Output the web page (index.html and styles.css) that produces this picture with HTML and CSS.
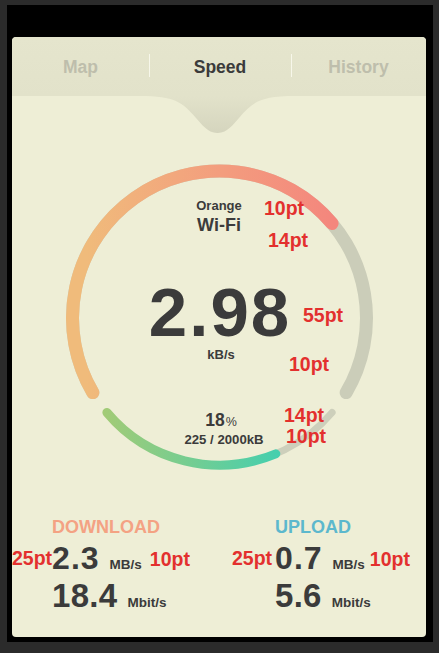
FILE: index.html
```html
<!DOCTYPE html>
<html lang="en">
<head>
<meta charset="utf-8">
<title>Speed</title>
<link rel="stylesheet" href="styles.css">
</head>
<body>
<div class="frame">
  <div class="card">
    <nav class="tabs">
      <div class="tab">Map</div>
      <div class="tab active">Speed</div>
      <div class="tab">History</div>
      <svg class="notch" width="155" height="38" viewBox="0 0 155 38">
        <defs>
          <linearGradient id="ng" x1="0" y1="0" x2="0" y2="1">
            <stop offset="0" stop-color="#e2e2ca"/>
            <stop offset="1" stop-color="#d5d5be"/>
          </linearGradient>
        </defs>
        <path d="M0,0 C35,0 42,6 56,22 C66,34 71,37 77.5,37 C84,37 89,34 99,22 C113,6 120,0 155,0 Z" fill="url(#ng)"/>
      </svg>
    </nav>

    <section class="gauge">
      <svg class="dial" width="414" height="409" viewBox="0 0 414 409">
        <defs>
          <linearGradient id="warm" gradientUnits="userSpaceOnUse" x1="74" y1="0" x2="322" y2="0">
            <stop offset="0" stop-color="#f0bb7b"/>
            <stop offset="0.55" stop-color="#f39d7e"/>
            <stop offset="1" stop-color="#f4867d"/>
          </linearGradient>
          <linearGradient id="green" gradientUnits="userSpaceOnUse" x1="92" y1="0" x2="266" y2="0">
            <stop offset="0" stop-color="#a2cb76"/>
            <stop offset="1" stop-color="#45cfae"/>
          </linearGradient>
        </defs>
        <path d="M80.84,296.6 A147,147 0 1 1 334.16,296.6" fill="none" stroke="#cbcdb9" stroke-width="13" stroke-linecap="round"/>
        <path d="M80.84,296.6 A147,147 0 0 1 320.1,127.5" fill="none" stroke="url(#warm)" stroke-width="13" stroke-linecap="round"/>
        <path d="M94.9,316.5 A147,147 0 0 0 320.1,316.5" fill="none" stroke="#cdcfbb" stroke-width="7" stroke-linecap="round"/>
        <path d="M94.9,316.5 A147,147 0 0 0 263.8,357.8" fill="none" stroke="url(#green)" stroke-width="9" stroke-linecap="round"/>
      </svg>

      <div class="network">Orange</div>
      <div class="ssid">Wi-Fi</div>
      <div class="speed">2.98</div>
      <div class="unit">kB/s</div>
      <div class="pct">18<span class="pct-sign">%</span></div>
      <div class="bytes">225 / 2000kB</div>

      <span class="ann ann-g1">10pt</span>
      <span class="ann ann-g2">14pt</span>
      <span class="ann ann-g3">55pt</span>
      <span class="ann ann-g4">10pt</span>
      <span class="ann ann-g5">14pt</span>
      <span class="ann ann-g6">10pt</span>
    </section>

    <section class="stats">
      <div class="stat stat-down">
        <div class="label">DOWNLOAD</div>
        <div class="row row-main">
          <span class="ann ann-pre">25pt</span>
          <span class="num">2.3</span>
          <span class="u">MB/s</span>
          <span class="ann ann-post">10pt</span>
        </div>
        <div class="row row-sub">
          <span class="num big">18.4</span>
          <span class="u">Mbit/s</span>
        </div>
      </div>
      <div class="stat stat-up">
        <div class="label">UPLOAD</div>
        <div class="row row-main">
          <span class="ann ann-pre">25pt</span>
          <span class="num">0.7</span>
          <span class="u">MB/s</span>
          <span class="ann ann-post">10pt</span>
        </div>
        <div class="row row-sub">
          <span class="num big">5.6</span>
          <span class="u">Mbit/s</span>
        </div>
      </div>
    </section>
  </div>
</div>
</body>
</html>
```

FILE: styles.css
```css
* { box-sizing: border-box; }

html, body {
  margin: 0;
  background: #2b2b2b;
}

body {
  padding: 5px 6px 11px 7px;
  font-family: "Liberation Sans", Arial, sans-serif;
  color: #3b3b3b;
}

.frame {
  width: 426px;
  height: 637px;
  background: #000;
  padding: 32px 7px 5px 5px;
}

.card {
  width: 414px;
  height: 600px;
  background: #eeeed6;
  border-radius: 4px;
  display: flex;
  flex-direction: column;
  overflow: hidden;
}

/* ---------- tabs ---------- */
.tabs {
  position: relative;
  z-index: 2;
  height: 59px;
  flex: none;
  display: grid;
  grid-template-columns: 137px 142px 1fr;
  background: linear-gradient(#e5e5cd, #e2e2ca);
  border-radius: 4px 4px 0 0;
}

.tab {
  position: relative;
  display: flex;
  align-items: center;
  justify-content: center;
  padding-top: 1px;
  font-size: 17.5px;
  font-weight: bold;
  color: #bebeac;
}

.tab.active { color: #3b3b3b; }

.tab + .tab::before {
  content: "";
  position: absolute;
  left: 0;
  top: 17px;
  width: 1px;
  height: 23px;
  background: #f7f7ea;
}

.notch {
  position: absolute;
  left: 128px;
  top: 100%;
  display: block;
}

/* ---------- gauge ---------- */
.gauge {
  position: relative;
  z-index: 0;
  height: 409px;
  flex: none;
  padding-top: 102px;
  text-align: center;
  font-weight: bold;
}

.dial {
  position: absolute;
  left: 0;
  top: 0;
  z-index: -1;
  display: block;
}

.network {
  font-size: 13px;
  line-height: 16px;
}

.ssid {
  font-size: 18px;
  line-height: 22px;
}

.speed {
  margin-top: 47px;
  font-size: 69px;
  line-height: 60px;
  letter-spacing: 2px;
  padding-left: 2px;
}

.unit {
  margin-top: 5px;
  font-size: 13px;
  line-height: 14px;
  padding-left: 4px;
}

.pct {
  margin-top: 48.5px;
  font-size: 17.5px;
  line-height: 19px;
  padding-left: 4px;
}

.pct-sign {
  font-size: 12.5px;
  font-weight: normal;
  margin-left: 1px;
}

.bytes {
  font-size: 13.2px;
  line-height: 15px;
  padding-left: 10px;
}

/* ---------- red annotations ---------- */
.ann {
  font-family: "Liberation Sans", Arial, sans-serif;
  font-weight: bold;
  font-size: 19.5px;
  line-height: 1;
  color: #e3302e;
  white-space: nowrap;
}

.gauge .ann { position: absolute; }
.ann-g1 { left: 252px; top: 102.5px; }
.ann-g2 { left: 256px; top: 134.5px; }
.ann-g3 { left: 291px; top: 210px; }
.ann-g4 { left: 277px; top: 258.5px; }
.ann-g5 { left: 272px; top: 310px; }
.ann-g6 { left: 274px; top: 331px; }

/* ---------- stats ---------- */
.stats {
  flex: none;
  display: grid;
  grid-template-columns: 223px 1fr;
  padding-top: 12px;
  padding-left: 40px;
  font-weight: bold;
}

.label {
  font-size: 18px;
  line-height: 20px;
}

.stat-down .label { color: #f4a283; }
.stat-up .label { color: #5cb8cd; }

.row {
  display: flex;
  align-items: baseline;
}

.row-main {
  margin-top: 5.4px;
  height: 32px;
}

.row-sub {
  margin-top: 4.2px;
  height: 33px;
}

.num {
  font-size: 32px;
  line-height: 1;
  letter-spacing: 1px;
}

.num.big {
  font-size: 33px;
  letter-spacing: 0.3px;
}

.u {
  font-size: 13.5px;
  line-height: 1;
  margin-left: 10px;
}

.ann-pre {
  align-self: flex-start;
  margin-top: 6.4px;
  margin-left: -40px;
}

.stat-up .ann-pre {
  margin-left: -43px;
  margin-right: 3px;
}

.ann-post {
  align-self: flex-start;
  margin-top: 7.4px;
  margin-left: 8px;
}

.stat-up .ann-post { margin-left: 5px; }
```
